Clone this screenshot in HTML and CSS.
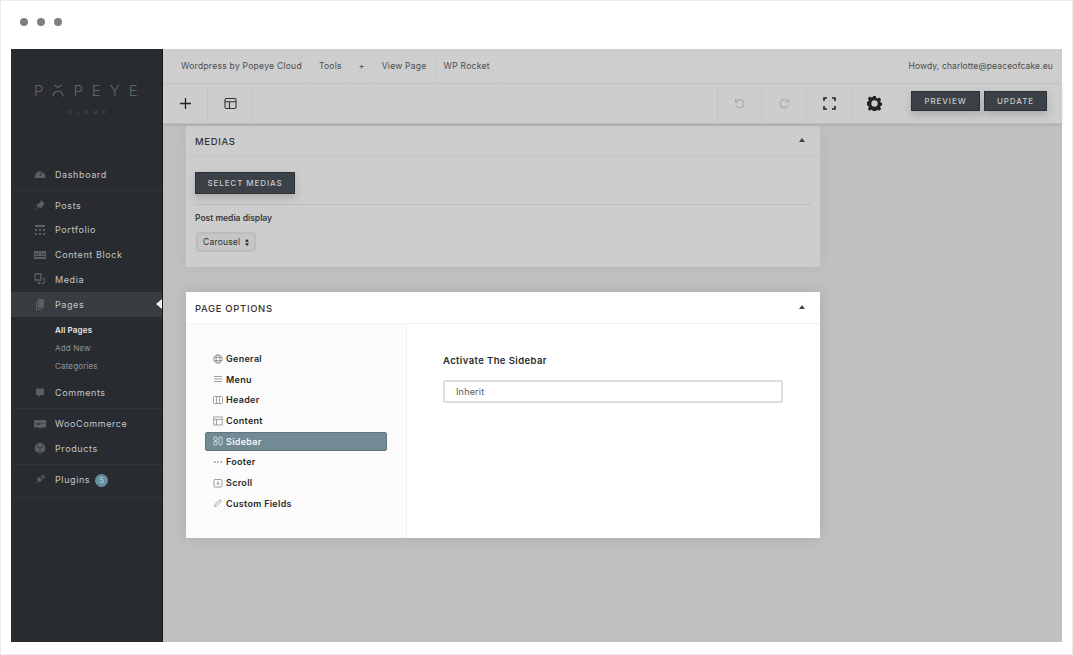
FILE: index.html
```html
<!DOCTYPE html>
<html lang="en">
<head>
    <meta charset="UTF-8">
    <meta name="viewport" content="width=device-width, initial-scale=1.0">
    <title>Popeye Cloud - Page Options</title>
    <link rel="stylesheet" href="styles.css">
</head>
<body>
<div class="frame">
    <!-- Window dots -->
    <div class="dots"><span></span><span></span><span></span></div>

    <div class="window">
        <!-- Sidebar -->
        <aside class="sidebar">
            <div class="logo">
                <div class="logo-name">
                    <span>P</span>
                    <svg width="12" height="13" viewBox="0 0 12 13" fill="none" stroke="#5f6469" stroke-width="1.2"><path d="M2.500 1L6 3.500 9.500 1"/><path d="M1 12.500c0-7 10-7 10 0"/></svg>
                    <span>P</span><span>E</span><span>Y</span><span>E</span>
                </div>
                <div class="logo-sub">CLOUD</div>
            </div>

            <div class="nav-group">
                <a class="nav-item">
                    <svg class="nav-icon" viewBox="0 0 12 12"><path d="M1 10a5.200 5.200 0 1 1 10 0z"/><path d="M6 8l2-4" stroke="#282c31" fill="none"/></svg>
                    Dashboard
                </a>
            </div>

            <div class="nav-group">
                <a class="nav-item">
                    <svg class="nav-icon" viewBox="0 0 12 12"><path d="M7 1l4 4-1 .5-2 2-.5 2.500-2-2L1.500 11 4 7.500l-2-2 2.500-.5 2-2z"/></svg>
                    Posts
                </a>
                <a class="nav-item">
                    <svg class="nav-icon" viewBox="0 0 12 12"><path d="M1 1h10v2H1zM1 5h2v2H1zM5 5h2v2H5zM9 5h2v2H9zM1 9h2v2H1zM5 9h2v2H5zM9 9h2v2H9z"/></svg>
                    Portfolio
                </a>
                <a class="nav-item">
                    <svg class="nav-icon" viewBox="0 0 12 12"><path d="M0 2h12v8H0z"/><path d="M1 5h4M7 5h4M1 7.500h10" stroke="#282c31" fill="none"/></svg>
                    Content Block
                </a>
                <a class="nav-item">
                    <svg class="nav-icon" viewBox="0 0 12 12"><path d="M1 1h6v6H1z" fill="none" stroke="#5a6065" stroke-width="1.300"/><path d="M8.500 5H11v5h-1V6H8.500zM4 9h2.500v2H4zM8 9.500h2v1.500H8z"/></svg>
                    Media
                </a>
                <a class="nav-item nav-active">
                    <svg class="nav-icon" viewBox="0 0 12 12"><path d="M4 1h6v9H4z"/><path d="M2 3h1.200v8H8v1H2z"/></svg>
                    Pages
                </a>
                <div class="subnav">
                    <a class="current">All Pages</a>
                    <a>Add New</a>
                    <a>Categories</a>
                </div>
                <a class="nav-item">
                    <svg class="nav-icon" viewBox="0 0 12 12"><path d="M2 1.500h8v6.500H6.500L4.500 10.500V8H2z"/></svg>
                    Comments
                </a>
            </div>

            <div class="nav-group">
                <a class="nav-item">
                    <svg class="nav-icon" viewBox="0 0 12 12"><path d="M0 2h12v7.500H7l-1 1-1-1H0z"/><path d="M2 4.500l1 2.500 1-2 1 2 1-2.500M7 5.500h1.500M9.500 5.500H11" stroke="#282c31" stroke-width=".7" fill="none"/></svg>
                    WooCommerce
                </a>
                <a class="nav-item">
                    <svg class="nav-icon" viewBox="0 0 12 12"><path d="M6 .5l5 2.500v6l-5 2.500-5-2.500V3z"/><path d="M1.500 3.500L6 6l4.500-2.500M6 6v5" stroke="#282c31" stroke-width=".7" fill="none"/></svg>
                    Products
                </a>
            </div>

            <div class="nav-group">
                <a class="nav-item">
                    <svg class="nav-icon" viewBox="0 0 12 12"><path d="M5 4l3 3-1.500 1.500c-1 .5-2 .3-2.700-.3L2 10.500 1.500 10l2.300-2.300c-.6-.7-.8-1.700-.3-2.700zM6.500 4L9 1.500l1 1L7.500 5zM8 5.500L10.500 3l1 1L9 6.500z"/></svg>
                    Plugins <span class="badge">5</span>
                </a>
            </div>
        </aside>

        <main class="main">
            <!-- Admin bar -->
            <div class="adminbar">
                <a class="first">Wordpress by Popeye Cloud</a>
                <a>Tools</a>
                <a>+</a>
                <a>View Page</a>
                <a>WP Rocket</a>
                <span class="howdy">Howdy, charlotte@peaceofcake.eu</span>
            </div>

            <!-- Toolbar -->
            <div class="toolbar">
                <div class="tool">
                    <svg width="13" height="13" viewBox="0 0 13 13" stroke="#222" stroke-width="1.300"><path d="M6.500 1v11M1 6.500h11"/></svg>
                </div>
                <div class="tool">
                    <svg width="13" height="13" viewBox="0 0 13 13" fill="none" stroke="#333" stroke-width="1.100"><rect x="1" y="1.500" width="11" height="10" rx="1.500"/><path d="M1 4.800h11M5.500 4.800v6.700"/></svg>
                </div>
                <div class="tool-space"></div>
                <div class="tool tool-line">
                    <svg width="12" height="12" viewBox="0 0 12 12" fill="none" stroke="#a9a9a9" stroke-width="1.200"><path d="M2.200 3.500A4.200 4.200 0 1 1 2 7.500"/><path d="M1.500 1v3h3"/></svg>
                </div>
                <div class="tool">
                    <svg width="12" height="12" viewBox="0 0 12 12" fill="none" stroke="#a9a9a9" stroke-width="1.200"><path d="M9.800 3.500A4.200 4.200 0 1 0 10 7.500"/><path d="M10.500 1v3h-3"/></svg>
                </div>
                <div class="tool">
                    <svg width="13" height="13" viewBox="0 0 13 13" fill="none" stroke="#222" stroke-width="1.600"><path d="M1 4V1h3M9 1h3v3M12 9v3H9M4 12H1V9"/></svg>
                </div>
                <div class="tool tool-gear">
                    <svg width="15" height="15" viewBox="0 0 16 16"><path fill="#222" fill-rule="evenodd" d="M6.600 0h2.800l.4 2 1.500.7 1.800-1.100 2 2-1.100 1.800.7 1.500 2 .4v2.800l-2 .4-.7 1.500 1.100 1.800-2 2-1.800-1.100-1.500.7-.4 2H6.600l-.4-2-1.500-.7-1.800 1.100-2-2 1.100-1.800-.7-1.500-2-.4V6.300l2-.4.7-1.500-1.100-1.800 2-2 1.800 1.100 1.500-.7zM8 4.600a3.400 3.400 0 1 0 0 6.800 3.400 3.400 0 0 0 0-6.800z"/></svg>
                </div>
                <div class="tool-actions">
                    <button class="btn btn-preview">PREVIEW</button>
                    <button class="btn btn-update">UPDATE</button>
                </div>
            </div>

            <div class="content">
                <!-- Medias -->
                <section class="card card-dim">
                    <header class="card-head">
                        <h2>MEDIAS</h2>
                        <span class="caret"></span>
                    </header>
                    <div class="medias-body">
                        <button class="btn btn-select">SELECT MEDIAS</button>
                        <hr class="rule">
                        <div class="field-label">Post media display</div>
                        <div class="fake-select">Carousel
                            <svg width="4" height="7" viewBox="0 0 5 9" fill="#222"><path d="M2.500 0L5 3.500H0zM2.500 9L0 5.500h5z"/></svg>
                        </div>
                    </div>
                </section>

                <!-- Page options -->
                <section class="card card-options">
                    <header class="card-head">
                        <h2>PAGE OPTIONS</h2>
                        <span class="caret"></span>
                    </header>
                    <div class="options-body">
                        <nav class="options-nav">
                            <a>
                                <svg class="opt-icon" viewBox="0 0 10 10"><circle cx="5" cy="5" r="4.200"/><ellipse cx="5" cy="5" rx="2" ry="4.200"/><path d="M1 3.500h8M1 6.500h8"/></svg>
                                General
                            </a>
                            <a>
                                <svg class="opt-icon" viewBox="0 0 10 10"><path d="M1 2.500h8M1 5h8M1 7.500h8"/></svg>
                                Menu
                            </a>
                            <a>
                                <svg class="opt-icon" viewBox="0 0 10 10"><rect x=".5" y="1.500" width="9" height="7" rx="1"/><path d="M3.500 1.500v7M6.500 1.500v7"/></svg>
                                Header
                            </a>
                            <a>
                                <svg class="opt-icon" viewBox="0 0 10 10"><rect x=".8" y="1" width="8.400" height="8"/><path d="M.8 3.500h8.400M3.500 3.500V9"/></svg>
                                Content
                            </a>
                            <a class="active">
                                <svg class="opt-icon" viewBox="0 0 10 10"><rect x="1" y="1" width="3" height="3.500" rx="1"/><rect x="1" y="5.500" width="3" height="3.500" rx="1"/><rect x="6" y="1" width="3" height="8" rx="1"/></svg>
                                Sidebar
                            </a>
                            <a>
                                <svg class="opt-icon" viewBox="0 0 10 10"><path d="M1 5h1.500M4.200 5h1.500M7.500 5H9" stroke-width="1.500"/></svg>
                                Footer
                            </a>
                            <a>
                                <svg class="opt-icon" viewBox="0 0 10 10"><rect x="1" y="1.500" width="8" height="7.500" rx="1"/><path d="M5 3v3.500M3.500 5L5 6.500 6.500 5"/></svg>
                                Scroll
                            </a>
                            <a>
                                <svg class="opt-icon" viewBox="0 0 10 10"><path d="M1.500 8.500l.5-2L7 1.500 8.500 3l-5 5z"/></svg>
                                Custom Fields
                            </a>
                        </nav>
                        <div class="options-panel">
                            <div class="panel-title">Activate The Sidebar</div>
                            <div class="panel-input">Inherit</div>
                        </div>
                    </div>
                </section>
            </div>
        </main>
    </div>
</div>
</body>
</html>
```

FILE: styles.css
```css
* {
    box-sizing: border-box;
}

html, body {
    margin: 0;
    height: 100%;
}

body {
    font-family: Inter, "Liberation Sans", sans-serif;
    overflow: hidden;
    background: #fff;
}

a {
    display: block;
}

.frame {
    width: 1073px;
    height: 655px;
    border: 1px solid #ececec;
    padding: 48px 10px 12px 10px;
    position: relative;
    background: #fff;
}

.dots {
    position: absolute;
    left: 19px;
    top: 17px;
    display: flex;
    gap: 9px;
}

.dots span {
    width: 8px;
    height: 8px;
    border-radius: 50%;
    background: #7f7f7f;
}

.window {
    display: flex;
    height: 593px;
    width: 1051px;
    background: #c0c0c0;
}

/* Sidebar */
.sidebar {
    width: 152px;
    flex: none;
    background: #282c31;
    border-right: 1px solid #16181b;
    color: #c4c6c8;
}

.logo {
    height: 111px;
    padding-top: 35px;
}

.logo-name {
    display: flex;
    align-items: flex-end;
    gap: 9px;
    margin-left: 23px;
    height: 13px;
    font-size: 15px;
    line-height: 13px;
    font-weight: 300;
    color: #5f6469;
}

.logo-sub {
    margin-top: 12px;
    margin-left: 57px;
    font-size: 5px;
    letter-spacing: 5px;
    color: #54595e;
}

.nav-group {
    border-bottom: 1px solid #30343a;
    padding: 2px 0 3px 0;
}

.nav-group:first-of-type {
    padding-top: 0;
    padding-bottom: 2px;
}

.nav-item {
    display: flex;
    align-items: center;
    position: relative;
    height: 24.750px;
    padding-left: 23px;
    font-size: 9px;
    letter-spacing: 0.600px;
}

.nav-icon {
    width: 12px;
    height: 12px;
    margin-right: 9px;
    fill: #5a6065;
    flex: none;
}

.nav-active {
    background: #383d42;
}

.nav-active::after {
    content: "";
    position: absolute;
    right: 0;
    top: 7px;
    border: 5px solid transparent;
    border-right: 6px solid #f4f4f4;
    border-left: 0;
}

.subnav {
    padding: 4px 0 6px 44px;
}

.subnav a {
    height: 18px;
    line-height: 18px;
    font-size: 8px;
    letter-spacing: 0.150px;
    color: #92959a;
}

.subnav .current {
    color: #e8e8e8;
    font-weight: 600;
}

.badge {
    width: 13px;
    height: 13px;
    margin: 3px 0 0 5px;
    border-radius: 50%;
    background: #65909f;
    color: #cfdde2;
    font-size: 7px;
    line-height: 13px;
    text-align: center;
    letter-spacing: 0;
}

.nav-group:last-child {
    padding-bottom: 5px;
}

/* Main */
.main {
    flex: 1;
    min-width: 0;
}

.adminbar {
    display: flex;
    align-items: stretch;
    height: 35px;
    background: #cecece;
    border-bottom: 1px solid #c6c6c6;
    font-size: 8.500px;
    letter-spacing: 0.270px;
    color: #4c4c4c;
}

.adminbar a {
    padding: 0 8px;
    line-height: 34px;
    border-right: 1px solid #c9c9c9;
}

.adminbar .first {
    padding-left: 18px;
}

.howdy {
    margin-left: auto;
    padding-right: 9px;
    line-height: 34px;
    letter-spacing: 0.130px;
}

.toolbar {
    display: flex;
    align-items: stretch;
    height: 40px;
    background: #cdcdcd;
    border-bottom: 1px solid #bdbdbd;
    box-shadow: 0 1px 3px rgba(0, 0, 0, 0.12);
    position: relative;
}

.tool {
    width: 45px;
    display: flex;
    align-items: center;
    justify-content: center;
    border-right: 1px solid #c4c4c4;
}

.tool-space {
    flex: 1;
}

.tool-line {
    border-left: 1px solid #c4c4c4;
}

.tool-gear {
    width: 44px;
    border-right: 0;
}

.tool-actions {
    display: flex;
    gap: 4px;
    padding: 7px 15px 0 15px;
}

.btn {
    display: block;
    border: 1px solid #2b3035;
    background: #3b4147;
    color: #c8cacc;
    font-family: inherit;
    font-size: 8px;
    font-weight: 500;
    letter-spacing: 0.900px;
    padding: 0;
    box-shadow: 0 4px 9px rgba(0, 0, 0, 0.16);
}

.btn-preview {
    width: 69px;
    height: 20px;
}

.btn-update {
    width: 63px;
    height: 20px;
}

.content {
    padding: 2px 0 0 23px;
}

.card {
    width: 634px;
}

.card-dim {
    height: 141px;
    background: #cdcdcd;
    box-shadow: 0 0 14px rgba(0, 0, 0, 0.05);
}

.card-options {
    margin-top: 25px;
    height: 246px;
    background: #fff;
    box-shadow: 0 0 12px rgba(0, 0, 0, 0.12);
}

.card-head {
    display: flex;
    align-items: center;
    justify-content: space-between;
    height: 31px;
    padding: 0 15px 0 9px;
    border-bottom: 1px solid #c6c6c6;
}

.card-options .card-head {
    height: 32px;
    padding-top: 1px;
    border-bottom-color: #f2f2f2;
}

.card-head h2 {
    margin: 0;
    font-size: 9.500px;
    font-weight: 500;
    letter-spacing: 0.650px;
    color: #333;
}

.caret {
    width: 0;
    height: 0;
    margin-bottom: 3px;
    border: 3px solid transparent;
    border-top: 0;
    border-bottom: 4px solid #444;
}

.medias-body {
    padding: 15px 9px 0 9px;
}

.btn-select {
    width: 100px;
    height: 22px;
}

.rule {
    margin: 10px 0 0 0;
    border: 0;
    border-top: 1px solid #bdbdbd;
}

.field-label {
    margin-top: 8px;
    font-size: 8.500px;
    font-weight: 600;
    color: #3a3a3a;
}

.fake-select {
    display: flex;
    align-items: center;
    justify-content: space-between;
    width: 60px;
    height: 20px;
    margin: 9px 0 0 1px;
    padding: 0 5px 0 5px;
    border: 2px solid #bcbcbc;
    border-radius: 4px;
    background: #c6c6c6;
    font-size: 8.500px;
    letter-spacing: 0.200px;
    color: #2e2e2e;
}

.options-body {
    display: flex;
    height: 214px;
}

.options-nav {
    width: 221px;
    padding: 25px 19px 0 19px;
    background: #fbfbfb;
    border-right: 1px solid #f0f0f0;
}

.options-nav a {
    display: flex;
    align-items: center;
    height: 19px;
    margin-bottom: 1.700px;
    padding-left: 8px;
    border-radius: 2px;
    font-size: 9px;
    font-weight: 600;
    letter-spacing: 0.300px;
    color: #2a2a2a;
}

.options-nav .active {
    background: #728a93;
    border: 1px solid #5f767f;
    padding-left: 7px;
    color: #f4f6f7;
}

.opt-icon {
    width: 10px;
    height: 10px;
    margin-right: 3px;
    fill: none;
    stroke: #8a8a8a;
    stroke-width: 0.800;
    flex: none;
}

.active .opt-icon {
    stroke: #e4e9eb;
}

.options-panel {
    flex: 1;
    padding: 31px 36px 0 36px;
}

.panel-title {
    font-size: 9.500px;
    font-weight: 600;
    letter-spacing: 0.400px;
    color: #2a2a2a;
}

.panel-input {
    width: 340px;
    height: 23px;
    margin-top: 14px;
    padding-left: 11px;
    border: 2px solid #ddd;
    border-radius: 2px;
    font-size: 9px;
    line-height: 19px;
    letter-spacing: 0.200px;
    color: #555;
}
```
